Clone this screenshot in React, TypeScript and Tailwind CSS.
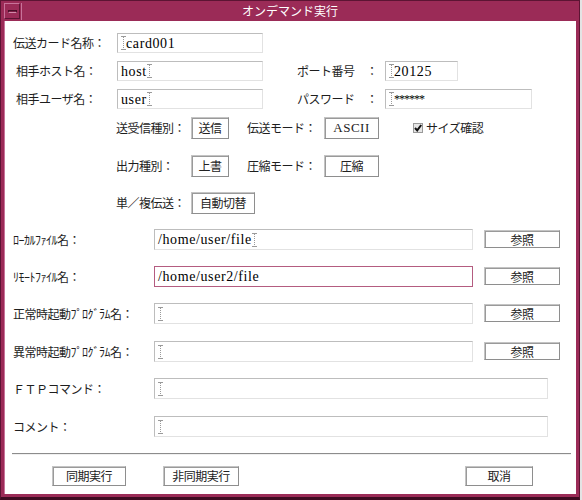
import type { ReactNode } from "react";

const jp = "font-['Noto_Sans_CJK_JP',sans-serif]";
const serif = "font-['Liberation_Serif',serif]";

function Caret() {
  return (
    <svg width="5" height="14" viewBox="0 0 5 14" className="shrink-0">
      <path d="M0 0.5H5M0 13.5H5" stroke="#9a9a9a" />
      <path d="M2.5 1V13" stroke="#9a9a9a" strokeDasharray="1 1" />
    </svg>
  );
}

type FieldProps = {
  width: string;
  height?: string;
  children?: ReactNode;
  focused?: boolean;
};

function Field({ width, height = "h-[20px]", children, focused }: FieldProps) {
  return (
    <div
      className={`${width} ${height} flex shrink-0 items-center border bg-white px-[3px] text-[14px] tracking-[0.6px] text-black ${serif} ${
        focused
          ? "border-[#b45c80]"
          : "border-[#bdbdbd] border-r-[#e2e2e2] border-b-[#e2e2e2]"
      }`}
    >
      {children ?? <Caret />}
    </div>
  );
}

function Btn({ width, height = "h-[22px]", children }: { width: string; height?: string; children: ReactNode }) {
  return (
    <button
      type="button"
      className={`${width} ${height} shrink-0 border border-[#c4c4c4] border-r-[#8e8e8e] border-b-[#8e8e8e] bg-white text-[12px] text-[#222] shadow-[inset_1px_1px_0_#9a9a9a] ${jp}`}
    >
      {children}
    </button>
  );
}

const fileRows = [
  { label: "ﾛｰｶﾙﾌｧｲﾙ名：", value: "/home/user/file", caretEnd: true, browse: true, gap: "mt-[15px]" },
  { label: "ﾘﾓｰﾄﾌｧｲﾙ名：", value: "/home/user2/file", focused: true, browse: true, gap: "mt-[16px]" },
  { label: "正常時起動ﾌﾟﾛｸﾞﾗﾑ名：", browse: true, gap: "mt-[16px]" },
  { label: "異常時起動ﾌﾟﾛｸﾞﾗﾑ名：", browse: true, gap: "mt-[17px]" },
  { label: "ＦＴＰコマンド：", gap: "mt-[16px]" },
  { label: "コメント：", gap: "mt-[17px]" },
];

export default function App() {
  return (
    <div className="h-[500px] w-[582px] bg-[#e4e4e4]">
      <div className="flex h-[500px] w-[580px] flex-col border-t border-l border-r border-b-[3px] border-[#5c1433] border-b-[#3e0c22] bg-[#9b2b57] pt-px pr-[3px] pb-[3px] pl-[3px]">
        {/* title bar */}
        <div className="relative flex h-[18px] items-center">
          <div className="flex h-[16px] w-[16px] items-center justify-center border border-[#c8739a] border-r-[#5c1433] border-b-[#5c1433]">
            <div className="h-[3px] w-[9px] border border-[#4a0e28] border-b-[#d38aa9] bg-[#7a1d44]" />
          </div>
          <div className="ml-px h-[17px] w-px bg-[#c8739a]" />
          <div className={`absolute inset-0 flex items-center justify-center text-[12px] text-white ${jp}`}>
            オンデマンド実行
          </div>
        </div>

        {/* body */}
        <div className={`mt-px flex flex-1 flex-col border-l border-[#c8739a] bg-white pl-[8px] text-[12px] tracking-[-0.5px] text-[#1e1e1e] ${jp}`}>
          <div className="mt-[12px] flex items-center">
            <div className="w-[104px]">伝送カード名称：</div>
            <Field width="w-[146px]">
              <Caret />
              <span>card001</span>
            </Field>
          </div>
          <div className="mt-[8px] flex items-center">
            <div className="w-[104px] pl-[3px]">相手ホスト名：</div>
            <Field width="w-[146px]">
              <span>host</span>
              <Caret />
            </Field>
            <div className="ml-[34px] w-[88px]">ポート番号　：</div>
            <Field width="w-[73px]">
              <Caret />
              <span>20125</span>
            </Field>
          </div>
          <div className="mt-[8px] flex items-center">
            <div className="w-[104px] pl-[3px]">相手ユーザ名：</div>
            <Field width="w-[146px]">
              <span>user</span>
              <Caret />
            </Field>
            <div className="ml-[34px] w-[88px]">パスワード　：</div>
            <Field width="w-[147px]">
              <Caret />
              <span className="text-[12px] tracking-[-1px]">******</span>
            </Field>
          </div>

          <div className="mt-[8px] flex items-center pl-[103px]">
            <div className="w-[75px]">送受信種別：</div>
            <Btn width="w-[38px]">送信</Btn>
            <div className="ml-[18px] w-[77px]">伝送モード：</div>
            <Btn width="w-[55px]">
              <span className={`${serif} text-[13px] tracking-[0.5px]`}>ASCII</span>
            </Btn>
            <div className="ml-[34px] flex items-center gap-[3px]">
              <svg width="10" height="10" viewBox="0 0 10 10">
                <rect x="0.5" y="0.5" width="9" height="9" fill="#e6e6e6" stroke="#9a9a9a" />
                <path d="M2 5l2.2 2.4L8.2 2" stroke="#111" strokeWidth="2" fill="none" />
              </svg>
              <span>サイズ確認</span>
            </div>
          </div>
          <div className="mt-[16px] flex items-center pl-[103px]">
            <div className="w-[75px]">出力種別：</div>
            <Btn width="w-[38px]">上書</Btn>
            <div className="ml-[18px] w-[77px]">圧縮モード：</div>
            <Btn width="w-[55px]">圧縮</Btn>
          </div>
          <div className="mt-[15px] flex items-center pl-[103px]">
            <div className="w-[75px]">単／複伝送：</div>
            <Btn width="w-[64px]">自動切替</Btn>
          </div>

          {fileRows.map((row) => (
            <div key={row.label} className={`${row.gap} flex items-center`}>
              <div className="w-[141px]">{row.label}</div>
              <Field
                width={row.browse ? "w-[319px]" : "w-[394px]"}
                height="h-[21px]"
                focused={row.focused}
              >
                {row.value ? (
                  <>
                    <span>{row.value}</span>
                    {row.caretEnd && <Caret />}
                  </>
                ) : undefined}
              </Field>
              {row.browse && (
                <div className="ml-[11px]">
                  <Btn width="w-[76px]" height="h-[18px]">参照</Btn>
                </div>
              )}
            </div>
          ))}
          <div className="ml-[-1px] mr-[5px] mt-[16px] h-[2px] border-t border-[#8c8c8c] border-b border-b-[#f0f0f0]" />

          <div className="mt-[11px] flex items-center">
            <div className="ml-[39px]">
              <Btn width="w-[74px]" height="h-[20px]">同期実行</Btn>
            </div>
            <div className="ml-[37px]">
              <Btn width="w-[76px]" height="h-[20px]">非同期実行</Btn>
            </div>
            <div className="ml-[226px]">
              <Btn width="w-[68px]" height="h-[20px]">取消</Btn>
            </div>
          </div>
        </div>
      </div>
    </div>
  );
}
